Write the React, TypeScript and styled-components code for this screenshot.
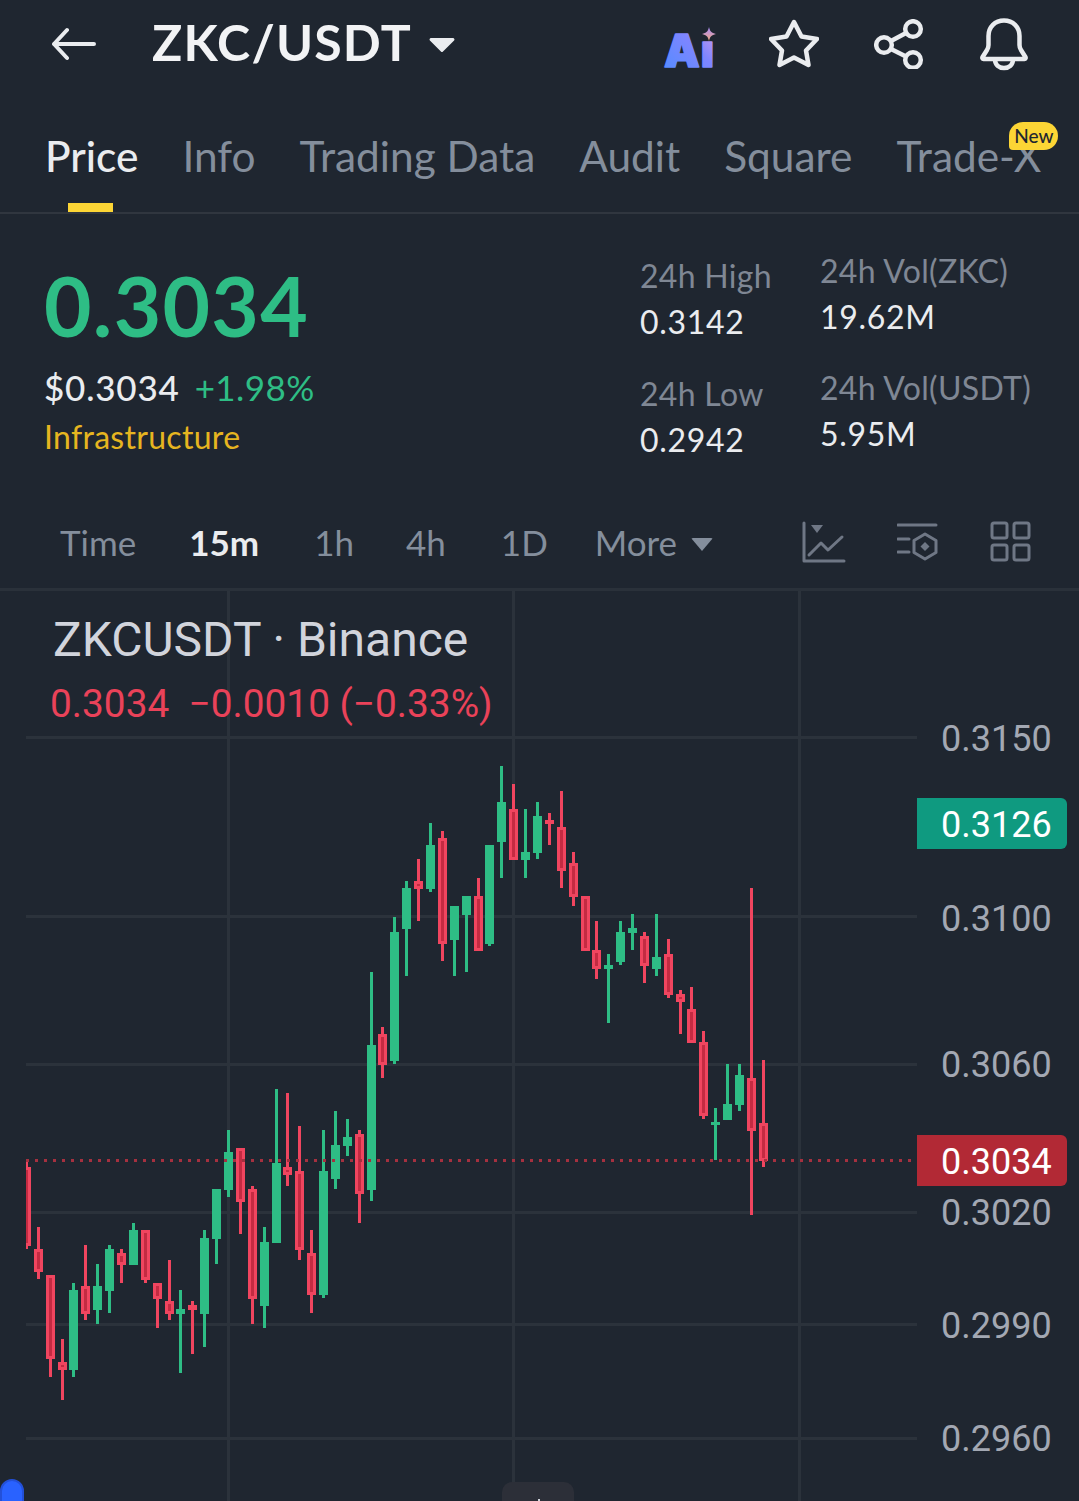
import React from "react";
import styled, { createGlobalStyle } from "styled-components";

const Global = createGlobalStyle`
  html, body { margin: 0; padding: 0; background: #1f2630; }
  body { width: 1079px; height: 1501px; overflow: hidden; font-family: Lato, "Open Sans", sans-serif; }
  * { box-sizing: border-box; }
`;

// wickTop, wickBottom, bodyTop, bodyBottom, up
type Candle = [number, number, number, number, number];

const candles: Candle[] = [
  [1162, 1249, 1167, 1246, 0], [1227, 1279, 1249, 1272, 0], [1275, 1377, 1275, 1359, 0], [1339, 1400, 1362, 1370, 0],
  [1283, 1377, 1290, 1370, 1], [1245, 1320, 1286, 1314, 0], [1264, 1324, 1286, 1310, 1], [1245, 1313, 1249, 1291, 1],
  [1249, 1283, 1253, 1265, 0], [1223, 1265, 1230, 1265, 1], [1230, 1283, 1230, 1280, 0], [1283, 1328, 1283, 1299, 0],
  [1260, 1320, 1301, 1314, 0], [1290, 1373, 1309, 1314, 1], [1301, 1354, 1305, 1310, 0], [1230, 1347, 1238, 1314, 1],
  [1189, 1264, 1189, 1239, 1], [1130, 1197, 1152, 1190, 1], [1148, 1234, 1148, 1202, 0], [1186, 1324, 1189, 1299, 0],
  [1227, 1328, 1242, 1306, 1], [1089, 1243, 1163, 1243, 1], [1093, 1186, 1167, 1175, 0], [1126, 1260, 1171, 1250, 0],
  [1230, 1313, 1253, 1295, 0], [1130, 1298, 1171, 1295, 1], [1111, 1189, 1145, 1179, 1], [1119, 1156, 1137, 1146, 1],
  [1130, 1223, 1134, 1194, 0], [972, 1201, 1045, 1190, 1], [1027, 1078, 1034, 1065, 0], [917, 1064, 932, 1061, 1],
  [881, 976, 888, 929, 1], [859, 921, 881, 889, 0], [823, 892, 845, 889, 1], [831, 961, 838, 944, 0],
  [906, 976, 906, 940, 1], [896, 972, 896, 915, 1], [878, 951, 896, 951, 0], [845, 946, 845, 944, 1],
  [766, 878, 802, 842, 1], [784, 860, 809, 860, 0], [809, 878, 852, 860, 1], [802, 859, 816, 853, 1],
  [813, 845, 820, 824, 0], [791, 888, 827, 871, 0], [852, 906, 863, 897, 0], [896, 951, 896, 951, 0],
  [921, 979, 950, 969, 0], [954, 1023, 965, 969, 1], [921, 965, 932, 962, 1], [914, 950, 928, 933, 1],
  [932, 983, 936, 966, 0], [914, 976, 957, 969, 1], [939, 998, 954, 995, 0], [990, 1034, 994, 1002, 0],
  [987, 1043, 1009, 1043, 0], [1031, 1119, 1042, 1116, 0], [1108, 1160, 1122, 1125, 1], [1064, 1120, 1104, 1120, 1],
  [1064, 1111, 1075, 1105, 1], [888, 1215, 1078, 1131, 0], [1060, 1167, 1123, 1161, 0],
];

const gridY = [737, 916, 1064, 1212, 1324, 1438];
const gridX = [228, 513, 799];
const axis = [
  { y: 738, label: "0.3150" },
  { y: 918, label: "0.3100" },
  { y: 1064, label: "0.3060" },
  { y: 1212, label: "0.3020" },
  { y: 1325, label: "0.2990" },
  { y: 1438, label: "0.2960" },
];

const PANEL_TOP = 591;

const Page = styled.div`
  position: relative;
  width: 1079px;
  height: 1501px;
  background: #1f2630;
  overflow: hidden;
  display: flex;
  flex-direction: column;
`;

const Header = styled.header`
  height: 90px;
  display: flex;
  align-items: center;
  padding: 0 50px 2px 52px;
`;

const Title = styled.div`
  margin: -4px 0 0 56px;
  font-size: 50px;
  font-weight: 700;
  color: #f2f3f5;
  letter-spacing: 1.2px;
`;

const Actions = styled.div`
  margin-left: auto;
  display: flex;
  align-items: center;
  gap: 55px;
`;

const Tabs = styled.nav`
  height: 124px;
  display: flex;
  gap: 44px;
  padding: 42px 0 0 45px;
  border-bottom: 2px solid #30363f;
`;

const Tab = styled.div<{ $active?: boolean }>`
  position: relative;
  height: 80px;
  font-size: 42.4px;
  line-height: 48px;
  font-weight: ${(p) => (p.$active ? 500 : 400)};
  color: ${(p) => (p.$active ? "#eaecef" : "#848e9c")};
  white-space: nowrap;

  ${(p) =>
    p.$active &&
    `&::after {
      content: "";
      position: absolute;
      left: 23px;
      bottom: 0;
      width: 45px;
      height: 9px;
      background: #fcd535;
    }`}
`;

const NewBadge = styled.span`
  position: absolute;
  right: -17px;
  top: -10px;
  width: 49px;
  height: 28px;
  border-radius: 14px 14px 14px 4px;
  background: #fcd535;
  color: #1f2630;
  font-size: 19px;
  line-height: 28px;
  font-weight: 500;
  text-align: center;
`;

const Summary = styled.section`
  height: 275px;
  display: flex;
  padding: 0 0 0 44px;
`;

const PriceBlock = styled.div`
  width: 596px;
  padding-top: 45px;
`;

const LastPrice = styled.div`
  font-size: 82px;
  line-height: 92px;
  font-weight: 700;
  letter-spacing: 1.3px;
  color: #2ebd85;
`;

const FiatRow = styled.div`
  margin-top: 14px;
  display: flex;
  gap: 15px;
  font-size: 35px;
  line-height: 44px;
`;

const Fiat = styled.span`
  color: #eaecef;
  font-weight: 500;
  letter-spacing: 0.8px;
`;

const Change = styled.span`
  color: #2ebd85;
  letter-spacing: 0.4px;
`;

const Sector = styled.div`
  margin-top: 8px;
  font-size: 32px;
  line-height: 40px;
  letter-spacing: 0.3px;
  color: #e6b520;
`;

const StatColumn = styled.div<{ $top: number; $width: number; $gap: number }>`
  width: ${(p) => p.$width}px;
  padding-top: ${(p) => p.$top}px;
  display: flex;
  flex-direction: column;
  gap: ${(p) => p.$gap}px;
`;

const Stat = styled.div`
  display: flex;
  flex-direction: column;
  gap: 4px;
`;

const StatLabel = styled.div`
  font-size: 32px;
  line-height: 42px;
  letter-spacing: 0.3px;
  color: #7f8794;
  white-space: nowrap;
`;

const StatValue = styled.div`
  font-size: 32px;
  line-height: 42px;
  letter-spacing: 0.7px;
  color: #eaecef;
`;

const Intervals = styled.div`
  height: 102px;
  display: flex;
  align-items: center;
  padding: 6px 47px 0 60px;
  border-bottom: 3px solid #2a313a;
`;

const Interval = styled.div<{ $active?: boolean; $gap: number }>`
  margin-right: ${(p) => p.$gap}px;
  font-size: 35px;
  font-weight: ${(p) => (p.$active ? 700 : 400)};
  color: ${(p) => (p.$active ? "#eaecef" : "#848e9c")};
`;

const MoreCaret = styled.span`
  display: inline-block;
  margin: 0 0 5px 14px;
  border-left: 11px solid transparent;
  border-right: 11px solid transparent;
  border-top: 13px solid #848e9c;
  border-radius: 2px;
  vertical-align: middle;
`;

const Tools = styled.div`
  margin-left: auto;
  display: flex;
  align-items: center;
  gap: 51px;
`;

const ChartPanel = styled.div`
  position: relative;
  flex: 1;
`;

const ChartSvg = styled.svg`
  position: absolute;
  left: 0;
  top: 0;
  display: block;
`;

const Legend = styled.div`
  position: absolute;
  left: 53px;
  top: 18px;
  font-family: Roboto, sans-serif;
`;

const LegendTitle = styled.div`
  font-size: 48px;
  line-height: 62px;
  color: #d1d4dc;
`;

const LegendValues = styled.div`
  margin: 8px 0 0 -3px;
  font-size: 38.8px;
  line-height: 50px;
  color: #ea4259;
  white-space: pre;
`;

const AxisLabel = styled.div<{ $y: number }>`
  position: absolute;
  left: 941px;
  top: ${(p) => p.$y - PANEL_TOP - 24}px;
  font-family: Roboto, sans-serif;
  font-size: 36px;
  line-height: 50px;
  color: #a3a8b3;
`;

const PriceTag = styled.div<{ $y: number; $bg: string }>`
  position: absolute;
  left: 917px;
  top: ${(p) => p.$y - PANEL_TOP}px;
  width: 150px;
  height: 51px;
  padding-left: 24px;
  border-radius: 0 6px 6px 0;
  background: ${(p) => p.$bg};
  font-family: Roboto, sans-serif;
  font-size: 36px;
  line-height: 55px;
  color: #fff;
`;

const BluePill = styled.div`
  position: absolute;
  left: 0;
  bottom: -12px;
  width: 24px;
  height: 34px;
  border-radius: 12px 12px 0 0;
  border: 2px solid #2350d8;
  background: #2962ff;
`;

const Handle = styled.div`
  position: absolute;
  left: 502px;
  bottom: 0;
  width: 72px;
  height: 19px;
  border-radius: 10px 10px 0 0;
  background: #2c2f38;

  &::after {
    content: "";
    position: absolute;
    left: 36px;
    bottom: 0;
    width: 2px;
    height: 2px;
    background: #d1d4dc;
  }
`;

const stroke = "#eaecef";

const BackIcon = () => (
  <svg width="44" height="34" viewBox="0 0 44 34" fill="none" stroke={stroke} strokeWidth="4" strokeLinecap="round" strokeLinejoin="round">
    <path d="M2 17h40M15 3 2 17l13 14" />
  </svg>
);

const TitleCaret = () => (
  <svg width="28" height="18" viewBox="0 0 28 18" style={{ marginLeft: 16, marginTop: 1 }}>
    <path d="M3 2h22a1.5 1.5 0 0 1 1.1 2.5L15 15.5a1.5 1.5 0 0 1-2.1 0L1.9 4.5A1.5 1.5 0 0 1 3 2z" fill={stroke} />
  </svg>
);

const AiLogo = () => (
  <svg width="54" height="50" viewBox="0 0 54 50" overflow="visible">
    <defs>
      <linearGradient id="aiFill" x1="0" y1="1" x2="1" y2="0">
        <stop offset="0" stopColor="#4f8dff" />
        <stop offset="0.6" stopColor="#7f85ff" />
        <stop offset="1" stopColor="#d9a0ea" />
      </linearGradient>
      <linearGradient id="aiStar" x1="0" y1="0" x2="0" y2="1">
        <stop offset="0" stopColor="#a78bff" />
        <stop offset="1" stopColor="#f5a97f" />
      </linearGradient>
    </defs>
    <text
      x="4"
      y="48"
      fontFamily="Inter, sans-serif"
      fontWeight="900"
      fontSize="45"
      letterSpacing="1"
      fill="url(#aiFill)"
      stroke="url(#aiFill)"
      strokeWidth="1.5"
      strokeLinejoin="round"
    >
      Aı
    </text>
    <path d="M49 8c1 4.500 2.500 6 7 7-4.500 1-6 2.500-7 7-1-4.500-2.500-6-7-7 4.500-1 6-2.500 7-7z" fill="url(#aiStar)" />
  </svg>
);

const StarIcon = () => (
  <svg width="50" height="50" viewBox="0 0 50 50" fill="none" stroke={stroke} strokeWidth="4.5" strokeLinejoin="round">
    <path d="M25 3l7.500 14.500L48 20 37 31.500 39.500 46 25 38.500 10.500 46 13 31.500 2 20l15.500-2.500z" />
  </svg>
);

const ShareIcon = () => (
  <svg width="50" height="50" viewBox="0 0 50 50" fill="none" stroke={stroke} strokeWidth="4.5">
    <circle cx="10" cy="26" r="7.800" />
    <circle cx="39" cy="10" r="7.800" />
    <circle cx="39" cy="41" r="7.800" />
    <path d="M17 22l15-8M17 30l15 7.500" />
  </svg>
);

const BellIcon = () => (
  <svg width="50" height="54" viewBox="0 0 50 54" fill="none" stroke={stroke} strokeWidth="4.5" strokeLinejoin="round">
    <path d="M4.500 42C3.500 42 3 41 3.600 40L8 33c1-1.500 1.500-3 1.500-5v-9C9.500 10 16 3.500 25 3.500S40.500 10 40.500 19v9c0 2 .5 3.500 1.500 5l4.400 7c.6 1 .1 2-.9 2z" />
    <path d="M16 42c0 6 4 9 9 9s9-3 9-9" />
  </svg>
);

const toolStroke = "#6f7785";

const IndicatorIcon = () => (
  <svg width="44" height="42" viewBox="0 0 44 42" fill="none" stroke={toolStroke} strokeWidth="3" strokeLinecap="round" strokeLinejoin="round">
    <path d="M2 2v38h40" />
    <path d="M7 34l12-12 7 7 14-13" />
    <path d="M9 4h12l-6 8z" fill={toolStroke} stroke="none" />
  </svg>
);

const TemplateIcon = () => (
  <svg width="42" height="42" viewBox="1 0 42 42" fill="none" stroke={toolStroke} strokeWidth="3" strokeLinecap="round" strokeLinejoin="round">
    <path d="M2 4h38M2 18h11M2 31h11" />
    <path d="M29 13l11 6.500v12L29 38l-11-6.500v-12z" />
    <path d="M29 21l4.500 4.500L29 30l-4.500-4.500z" fill={toolStroke} stroke="none" />
  </svg>
);

const LayoutIcon = () => (
  <svg width="42" height="42" viewBox="0 0 42 42" fill="none" stroke={toolStroke} strokeWidth="3" strokeLinejoin="round">
    <rect x="2" y="2" width="15" height="15" rx="2" />
    <rect x="24" y="2" width="15" height="15" rx="2" />
    <rect x="2" y="24" width="15" height="15" rx="2" />
    <rect x="24" y="24" width="15" height="15" rx="2" />
  </svg>
);

const CandleMark = ({ candle, index }: { candle: Candle; index: number }) => {
  const [wt, wb, bt, bb, up] = candle;
  const cx = 38.3 + 11.885 * (index - 1);
  const left = Math.round(cx - 4.5);
  const color = up ? "#2ebd85" : "#f0455f";
  return (
    <g>
      <rect x={left + 3} y={wt} width={3} height={wb - wt} fill={color} />
      <rect x={left} y={bt} width={9} height={Math.max(bb - bt, 3)} fill={color} />
      {!up && bb - bt > 6 && <rect x={left + 3} y={bt + 3} width={3} height={bb - bt - 6} fill="#c42b42" />}
    </g>
  );
};

const Chart = () => (
  <ChartSvg width="1079" height="910" viewBox={`0 ${PANEL_TOP} 1079 910`} shapeRendering="crispEdges">
    <defs>
      <clipPath id="plot">
        <rect x="26" y={PANEL_TOP} width="891" height="910" />
      </clipPath>
    </defs>
    {gridX.map((x) => (
      <rect key={x} x={x - 1} y={PANEL_TOP} width="3" height="910" fill="#2b323b" />
    ))}
    {gridY.map((y) => (
      <rect key={y} x="26" y={y - 1} width="891" height="3" fill="#2b323b" />
    ))}
    <g clipPath="url(#plot)">
      {candles.map((c, i) => (
        <CandleMark key={i} candle={c} index={i} />
      ))}
    </g>
    <line x1="26" y1="1160.500" x2="914" y2="1160.500" stroke="#a5303f" strokeWidth="3" strokeDasharray="3 6" />
  </ChartSvg>
);

export default function App() {
  return (
    <Page>
      <Global />
      <Header>
        <BackIcon />
        <Title>ZKC/USDT</Title>
        <TitleCaret />
        <Actions>
          <AiLogo />
          <StarIcon />
          <ShareIcon />
          <BellIcon />
        </Actions>
      </Header>

      <Tabs>
        <Tab $active>Price</Tab>
        <Tab>Info</Tab>
        <Tab>Trading Data</Tab>
        <Tab>Audit</Tab>
        <Tab>Square</Tab>
        <Tab>
          Trade-X
          <NewBadge>New</NewBadge>
        </Tab>
      </Tabs>

      <Summary>
        <PriceBlock>
          <LastPrice>0.3034</LastPrice>
          <FiatRow>
            <Fiat>$0.3034</Fiat>
            <Change>+1.98%</Change>
          </FiatRow>
          <Sector>Infrastructure</Sector>
        </PriceBlock>
        <StatColumn $top={41} $width={180} $gap={30}>
          <Stat>
            <StatLabel>24h High</StatLabel>
            <StatValue>0.3142</StatValue>
          </Stat>
          <Stat>
            <StatLabel>24h Low</StatLabel>
            <StatValue>0.2942</StatValue>
          </Stat>
        </StatColumn>
        <StatColumn $top={36} $width={240} $gap={29}>
          <Stat>
            <StatLabel>24h Vol(ZKC)</StatLabel>
            <StatValue>19.62M</StatValue>
          </Stat>
          <Stat>
            <StatLabel>24h Vol(USDT)</StatLabel>
            <StatValue>5.95M</StatValue>
          </Stat>
        </StatColumn>
      </Summary>

      <Intervals>
        <Interval $gap={53}>Time</Interval>
        <Interval $gap={55} $active>15m</Interval>
        <Interval $gap={52}>1h</Interval>
        <Interval $gap={55}>4h</Interval>
        <Interval $gap={47}>1D</Interval>
        <Interval $gap={0}>
          More
          <MoreCaret />
        </Interval>
        <Tools>
          <IndicatorIcon />
          <TemplateIcon />
          <LayoutIcon />
        </Tools>
      </Intervals>

      <ChartPanel>
        <Chart />
        <Legend>
          <LegendTitle>ZKCUSDT · Binance</LegendTitle>
          <LegendValues>0.3034  −0.0010 (−0.33%)</LegendValues>
        </Legend>
        {axis.map((a) => (
          <AxisLabel key={a.y} $y={a.y}>{a.label}</AxisLabel>
        ))}
        <PriceTag $y={798} $bg="#0f9a80">0.3126</PriceTag>
        <PriceTag $y={1135} $bg="#b22935">0.3034</PriceTag>
        <BluePill />
        <Handle />
      </ChartPanel>
    </Page>
  );
}
